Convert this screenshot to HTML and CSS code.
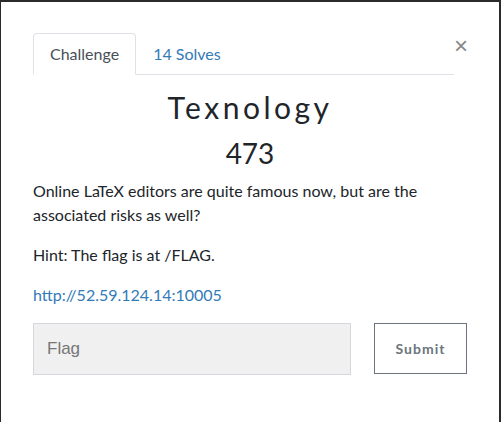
FILE: index.html
```html
<!DOCTYPE html>
<html>
  <head>
    <title>Texnology</title>
    <link rel="stylesheet" href="styles.css">
  </head>
  <body>
    <div class="backdrop">
      <div class="modal">
        <div class="modal-head">
          <ul class="tabs">
            <li class="tab active">Challenge</li>
            <li class="tab">14 Solves</li>
          </ul>
          <span class="close">&times;</span>
        </div>

        <div class="challenge">
          <h2 class="name">Texnology</h2>
          <h3 class="value">473</h3>
          <p>Online LaTeX editors are quite famous now, but are the associated risks as well?</p>
          <p>Hint: The flag is at /FLAG.</p>
          <p><a href="#">http://52.59.124.14:10005</a></p>

          <form class="submit-row" onsubmit="return false;">
            <input class="flag" type="text" placeholder="Flag">
            <button class="btn-submit" type="submit">Submit</button>
          </form>
        </div>
      </div>
    </div>
  </body>
</html>
```

FILE: styles.css
```css
html, body {
  margin: 0;
  height: 100%;
  background: #2b2b2b;
}

.backdrop {
  height: 100%;
  padding: 2px 2px 0 1px;
  box-sizing: border-box;
}

.modal {
  background: #fff;
  height: 100%;
  padding: 31px 32px 0 32px;
  box-sizing: border-box;
  font-family: Lato, "Open Sans", sans-serif;
  color: #212529;
}

.modal-head {
  display: flex;
  align-items: flex-start;
}

.tabs {
  flex: 1;
  display: flex;
  list-style: none;
  margin: 0;
  padding: 0;
  border-bottom: 1px solid #dee2e6;
}

.tab {
  padding: 8px 16px;
  line-height: 24px;
  font-size: 16px;
  color: #337ab7;
  border: 1px solid transparent;
  border-top-left-radius: 4px;
  border-top-right-radius: 4px;
  margin-bottom: -1px;
}

.tab.active {
  color: #495057;
  border-color: #dee2e6 #dee2e6 #fff;
}

.close {
  width: 13px;
  text-align: right;
  font-family: "Liberation Sans", Arial, sans-serif;
  font-size: 24px;
  line-height: 24px;
  margin-top: 1px;
  color: #888;
}

.challenge { padding-top: 15px; }

.name {
  margin: 0 0 12px;
  text-align: center;
  font-weight: 400;
  font-size: 30px;
  line-height: 34px;
  letter-spacing: 3.5px;
}

.value {
  margin: 0 0 9px;
  text-align: center;
  font-weight: 400;
  font-size: 28px;
  line-height: 34px;
}

.challenge p {
  margin: 0 0 16px;
  font-size: 16px;
  line-height: 24px;
}

.challenge a {
  color: #337ab7;
  text-decoration: none;
}

.submit-row {
  display: grid;
  grid-template-columns: 1fr 93px;
  column-gap: 23px;
  margin-top: 1px;
}

.flag {
  height: 52px;
  box-sizing: border-box;
  border: 1px solid #d3d6db;
  background: #f0f0f0;
  padding: 0 13px;
  font-family: "Liberation Sans", Arial, sans-serif;
  font-size: 17px;
  color: #495057;
}

.flag::placeholder { color: #767676; }

.btn-submit {
  height: 51px;
  background: #fff;
  border: 1px solid #6c757d;
  color: #6c757d;
  font-family: Lato, sans-serif;
  font-weight: 700;
  font-size: 14px;
  letter-spacing: 1px;
}
```
